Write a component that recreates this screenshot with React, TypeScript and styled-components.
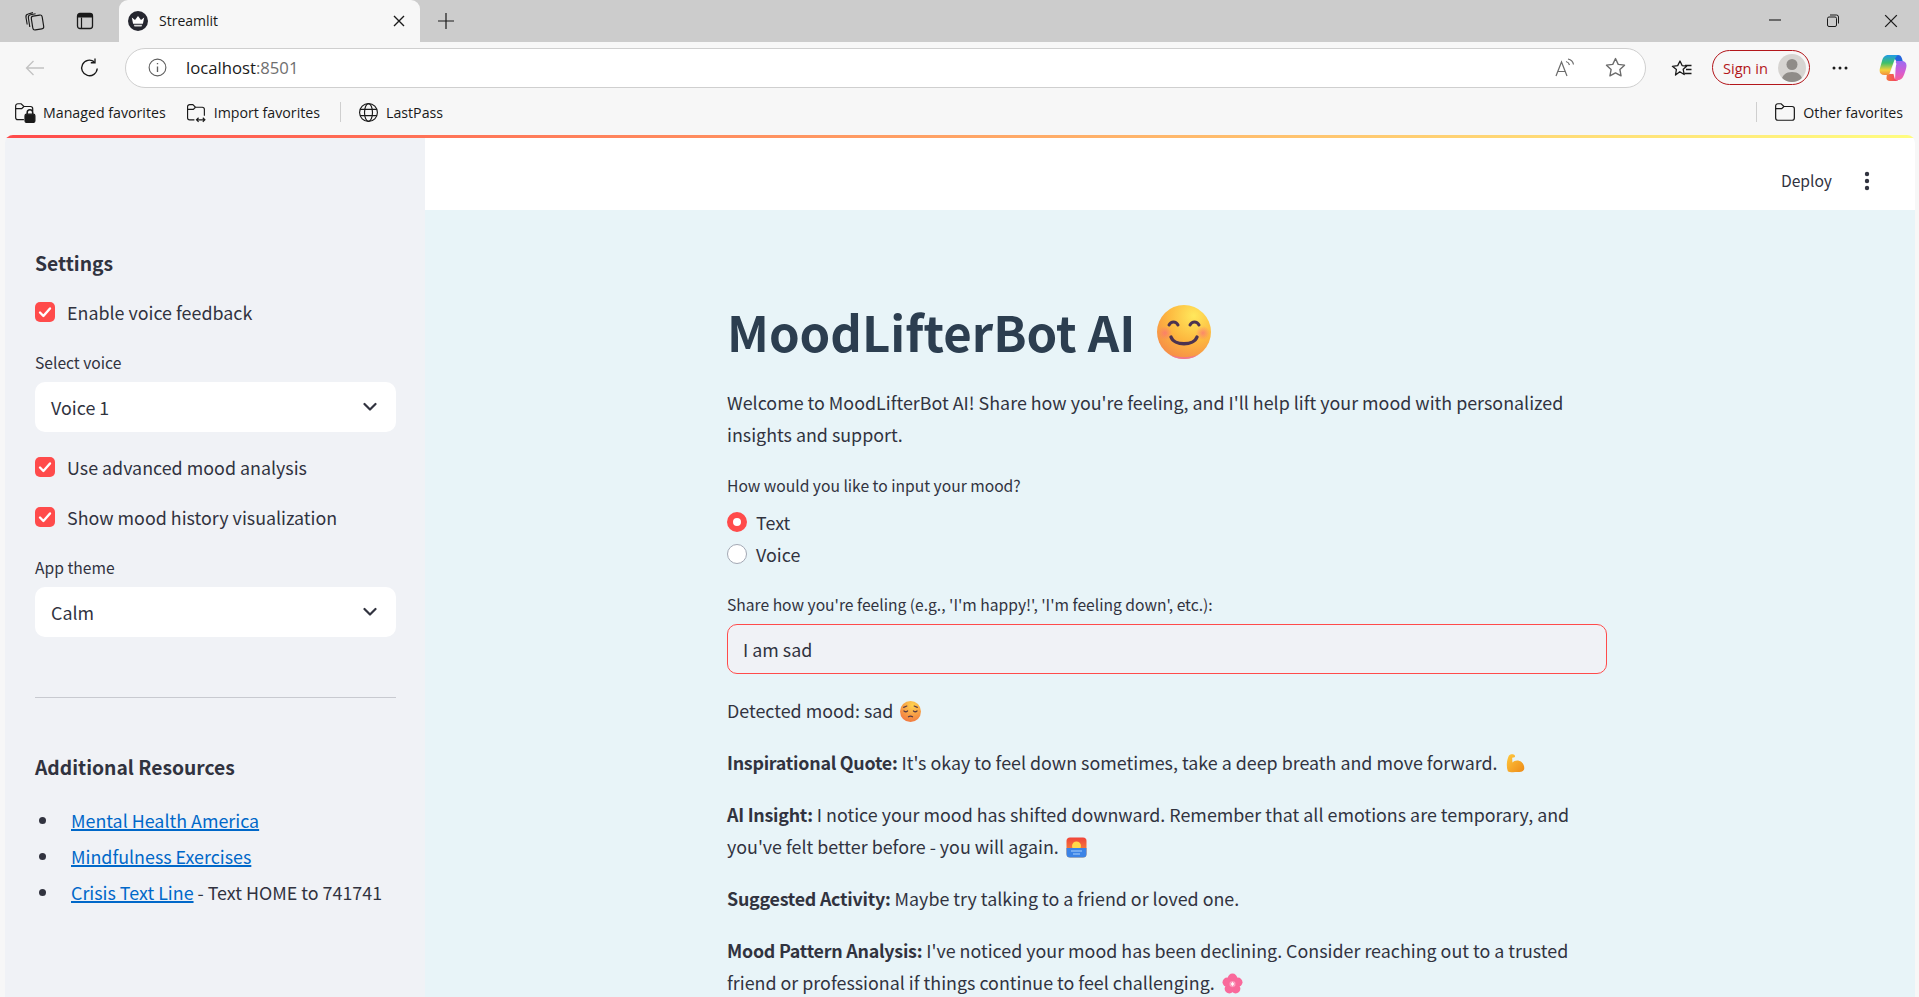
import React from 'react';
import styled, { createGlobalStyle } from 'styled-components';

const chromeFont = `"Open Sans", "Noto Sans", sans-serif`;
const pageFont = `"Noto Sans CJK JP", "Noto Sans", sans-serif`;

const Global = createGlobalStyle`
  html, body { margin: 0; padding: 0; height: 100%; overflow: hidden; background: #f7f7f7; }
  #root { height: 100%; }
  * { box-sizing: border-box; }
`;

const Shell = styled.div`
  display: flex;
  flex-direction: column;
  height: 997px;
  overflow: hidden;
  font-family: ${chromeFont};
  background: #f7f7f7;
`;

const TabStrip = styled.div`
  display: flex;
  align-items: flex-end;
  height: 42px;
  flex: none;
  padding-left: 8px;
  background: #cccccc;
  color: #1a1a1a;
`;

const StripButton = styled.div`
  width: 51px;
  height: 42px;
  display: flex;
  align-items: center;
  justify-content: center;
  flex: none;
`;

const Tab = styled.div`
  width: 301px;
  height: 42px;
  margin-left: 9px;
  padding: 0 15px 0 9px;
  display: flex;
  align-items: center;
  gap: 11px;
  background: #f7f7f7;
  border-radius: 9px 9px 0 0;
  flex: none;
  font-size: 14px;
`;

const TabTitle = styled.span`
  flex: 1;
  margin-top: -1px;
`;

const Spacer = styled.div`
  flex: 1;
`;

const WindowButtons = styled.div`
  display: flex;
  align-self: stretch;
`;

const WindowButton = styled.div`
  width: 58px;
  padding-left: 2px;
  display: flex;
  align-items: center;
  justify-content: center;
`;

const Toolbar = styled.div`
  display: flex;
  align-items: center;
  height: 51px;
  flex: none;
  padding: 0 3px 0 12px;
`;

const NavButton = styled.div<{ $width?: number; $left?: number }>`
  width: ${(p) => p.$width ?? 46}px;
  margin-left: ${(p) => p.$left ?? 0}px;
  height: 38px;
  display: flex;
  align-items: center;
  justify-content: center;
  flex: none;
`;

const AddressBar = styled.div`
  flex: 1;
  height: 40px;
  margin-left: 3px;
  padding: 0 5px 0 22px;
  display: flex;
  align-items: center;
  background: #fff;
  border: 1px solid #cfcfcf;
  border-radius: 20px;
`;

const Url = styled.div`
  margin-left: 19px;
  font-size: 16.7px;
  color: #1a1a1a;
`;

const UrlPort = styled.span`
  color: #6f6f6f;
`;

const AddressIcon = styled.div`
  width: 50px;
  display: flex;
  justify-content: center;
`;

const SignIn = styled.div`
  display: flex;
  align-items: center;
  justify-content: space-between;
  width: 98px;
  height: 35px;
  margin-left: 8px;
  padding: 0 3px 0 10px;
  border: 1.5px solid #b3161b;
  border-radius: 18px;
  font-size: 14.6px;
  color: #b3161b;
  flex: none;
`;

const Avatar = styled.div`
  width: 28px;
  height: 28px;
  border-radius: 50%;
  overflow: hidden;
  background: #d6d4d1;
`;

const BookmarkBar = styled.div`
  display: flex;
  align-items: center;
  height: 42px;
  flex: none;
  padding: 0 16px 4px 14px;
  font-size: 14.2px;
  color: #1a1a1a;
`;

const Bookmark = styled.div<{ $last?: boolean }>`
  display: flex;
  align-items: center;
  gap: 7px;
  margin-right: ${(p) => (p.$last ? 0 : 20)}px;
`;

const BookmarkDivider = styled.div`
  width: 1px;
  height: 20px;
  background: #cfcfcf;
  margin-right: 17px;
`;

const Page = styled.div`
  flex: 1;
  min-height: 0;
  margin: 0 4px 0 5px;
  display: flex;
  flex-direction: column;
  border-radius: 8px 8px 0 0;
  overflow: hidden;
  font-family: ${pageFont};
  color: #31333f;
`;

const Decoration = styled.div`
  height: 3px;
  flex: none;
  background: linear-gradient(90deg, #ff4b4b, #fffd80);
`;

const Columns = styled.div`
  flex: 1;
  min-height: 0;
  display: flex;
`;

const Sidebar = styled.aside`
  width: 420px;
  flex: none;
  padding: 110px 29px 0 30px;
  background: #f0f2f6;
`;

const SideHeading = styled.h3<{ $top?: number }>`
  margin: ${(p) => p.$top ?? 0}px 0 0;
  font-size: 19.3px;
  line-height: 30px;
  font-weight: 600;
  color: #31333f;
`;

const CheckRow = styled.label<{ $top?: number }>`
  display: flex;
  align-items: center;
  gap: 12px;
  height: 32px;
  margin-top: ${(p) => p.$top ?? 18}px;
  font-size: 17.86px;
  line-height: 32px;
`;

const CheckBox = styled.span`
  width: 20px;
  height: 20px;
  border-radius: 5px;
  background: #ff4b4b;
  display: flex;
  align-items: center;
  justify-content: center;
  flex: none;
`;

const FieldLabel = styled.div<{ $top?: number }>`
  margin-top: ${(p) => p.$top ?? 0}px;
  font-size: 15.63px;
  line-height: 26px;
  height: 24px;
`;

const SelectBox = styled.div`
  height: 50px;
  margin-top: 8px;
  padding: 0 19px 0 16px;
  display: flex;
  align-items: center;
  justify-content: space-between;
  background: #fff;
  border-radius: 10px;
  font-size: 17.86px;
`;

const Rule = styled.hr`
  margin: 60px 0 0;
  border: none;
  border-top: 1px solid #c8cad0;
`;

const ResourceList = styled.ul`
  margin: 22px 0 0;
  padding: 0;
  list-style: none;
  font-size: 17.86px;
  line-height: 32px;
`;

const ResourceItem = styled.li`
  display: flex;
  align-items: center;
  margin-bottom: 4px;
  white-space: pre;

  &::before {
    content: '';
    width: 7px;
    height: 7px;
    margin: 0 25px 0 4px;
    border-radius: 50%;
    background: #31333f;
    flex: none;
  }
`;

const Link = styled.a`
  color: #0068c9;
  text-decoration: underline;
  text-decoration-thickness: 1.5px;
`;

const Main = styled.main`
  flex: 1;
  min-width: 0;
  display: flex;
  flex-direction: column;
  background: #e8f4f8;
`;

const MainHeader = styled.header`
  height: 72px;
  flex: none;
  padding: 13px 45px 0 0;
  display: flex;
  align-items: center;
  justify-content: flex-end;
  gap: 32px;
  background: #fff;
  font-size: 15.63px;
  color: #31333f;
`;

const Content = styled.div`
  width: 880px;
  margin-left: 302px;
  padding-top: 84px;
`;

const Title = styled.h1`
  margin: 0;
  display: flex;
  align-items: center;
  height: 74px;
  gap: 22px;
  font-size: 49.1px;
  line-height: 74px;
  font-weight: 700;
  color: #2c3e50;

  svg {
    margin-top: 2px;
  }
`;

const Para = styled.p`
  margin: 0 0 20px;
  font-size: 17.86px;
  line-height: 32px;
  color: #31333f;

  strong {
    font-weight: 600;
    letter-spacing: -0.25px;
  }
`;

const Lead = styled(Para)`
  margin: 18px 0 23px;
`;

const RadioGroup = styled.div`
  display: flex;
  flex-direction: column;
  margin-top: 9px;
`;

const RadioRow = styled.div`
  display: flex;
  align-items: center;
  gap: 9px;
  height: 32px;
  font-size: 17.86px;
`;

const RadioDot = styled.span<{ $on?: boolean }>`
  width: 20px;
  height: 20px;
  border-radius: 50%;
  flex: none;
  background: #fff;
  border: ${(p) => (p.$on ? '6px solid #ff4b4b' : '1px solid #a3a8b4')};
`;

const TextField = styled.div`
  height: 50px;
  margin-top: 8px;
  padding: 0 15px;
  display: flex;
  align-items: center;
  background: #f0f2f6;
  border: 1px solid #ff4b4b;
  border-radius: 10px;
  font-size: 17.86px;
`;

const Results = styled.div`
  margin-top: 20px;
`;

const Inline = styled.span`
  display: inline-flex;
  vertical-align: -4px;
  margin-left: 3px;
`;

const WorkspacesIcon = () => (
  <svg width="22" height="22" viewBox="0 0 22 22" fill="none" stroke="#1a1a1a" strokeWidth="1.150">
    <rect x="9" y="5.500" width="11" height="14" rx="2.200" transform="rotate(-9 14.500 12.500)" />
    <path d="M6.800 17 5.400 8c-.3-1.700.6-3 2.200-3.300l5-.9" />
    <path d="M4.200 14.500 3 7.500C2.700 5.700 3.600 4.300 5.200 4l4.800-1.400" />
  </svg>
);

const TabsIcon = () => (
  <svg width="18" height="18" viewBox="0 0 18 18">
    <rect x="1.500" y="1.500" width="15" height="15" rx="2.500" fill="none" stroke="#1a1a1a" strokeWidth="1.300" />
    <path d="M1.500 4A2.500 2.500 0 0 1 4 1.500h10A2.500 2.500 0 0 1 16.500 4v1.500h-15z" fill="#1a1a1a" />
    <path d="M5.500 5.500v11" stroke="#1a1a1a" strokeWidth="1.200" />
  </svg>
);

const FaviconCrown = () => (
  <svg width="20" height="20" viewBox="0 0 20 20">
    <circle cx="10" cy="10" r="10" fill="#25262f" />
    <path d="M3.800 6.500 7 9 10 5l3 4 3.200-2.500-1.300 6.300H5.100z" fill="#fff" />
    <path d="M5.800 13.800h8.400l-.7 1.600H6.500z" fill="#dcdcdc" />
  </svg>
);

const CloseGlyph = ({ size = 12, width = 1.4 }: { size?: number; width?: number }) => (
  <svg width={size} height={size} viewBox="0 0 12 12">
    <path d="M1 1l10 10M11 1 1 11" stroke="#1a1a1a" strokeWidth={width} fill="none" />
  </svg>
);

const PlusGlyph = () => (
  <svg width="18" height="18" viewBox="0 0 18 18">
    <path d="M9 1v16M1 9h16" stroke="#1a1a1a" strokeWidth="1.200" />
  </svg>
);

const MinimizeGlyph = () => (
  <svg width="14" height="14" viewBox="0 0 14 14">
    <path d="M1 6h12" stroke="#1a1a1a" strokeWidth="1.100" />
  </svg>
);

const RestoreGlyph = () => (
  <svg width="14" height="14" viewBox="0 0 14 14" fill="none" stroke="#1a1a1a" strokeWidth="1">
    <rect x="1.500" y="3" width="9" height="9.500" rx="1.500" />
    <path d="M4 1h6.500A2 2 0 0 1 12.500 3v6.500" />
  </svg>
);

const BackIcon = () => (
  <svg width="20" height="18" viewBox="0 0 20 18" fill="none" stroke="#c2c2c2" strokeWidth="1.300">
    <path d="M19 9H1.500M8.500 2 1.500 9l7 7" />
  </svg>
);

const ReloadIcon = () => (
  <svg width="20" height="20" viewBox="0 0 18 18" fill="none" stroke="#1a1a1a" strokeWidth="1.200">
    <path d="M15.500 9.500a7 7 0 1 1-2.600-6" />
    <path d="M13.500 0.500v3.800H9.700" />
  </svg>
);

const InfoIcon = () => (
  <svg width="19" height="19" viewBox="0 0 17 17" fill="none" stroke="#5e5e5e" strokeWidth="1">
    <circle cx="8.500" cy="8.500" r="7.500" />
    <path d="M8.500 7.500v5M8.500 4.400v1.200" strokeWidth="1.200" />
  </svg>
);

const ReadAloudIcon = () => (
  <svg width="20" height="20" viewBox="0 0 20 20" fill="none" stroke="#6b6b6b" strokeWidth="1.200">
    <path d="M1 18 6.500 4 12 18M3 13.500h7" />
    <path d="M11 3.500c2 .5 3 1.500 3.500 3.500M13 1c3 .6 5 2.500 5.500 5.500" />
  </svg>
);

const StarIcon = () => (
  <svg width="21" height="21" viewBox="0 0 20 20" fill="none" stroke="#6b6b6b" strokeWidth="1.300" strokeLinejoin="round">
    <path d="M10 1.500l2.600 5.500 6 .8-4.400 4.200 1.100 6L10 15.100 4.700 18l1.100-6L1.400 7.800l6-.8z" />
  </svg>
);

const FavoritesIcon = () => (
  <svg width="21" height="20" viewBox="0 0 21 20" fill="none" stroke="#1a1a1a" strokeWidth="1.300" strokeLinejoin="round">
    <path d="M9 .5l2.100 4.600 4.500.6-3.400 3.100 1 5.200L8.800 11.200 4.500 14.500 5.400 9 1.400 5.800l5.300-.7z" transform="translate(0 2.500)" />
    <path d="M14 7.500h6.500M15 11.500h5.500M13.500 15.500h7" />
  </svg>
);

const AvatarGlyph = () => (
  <svg width="28" height="28" viewBox="0 0 28 28">
    <circle cx="14" cy="10.500" r="5.500" fill="#8f8c88" />
    <path d="M3.500 28c0-7 4.500-10 10.500-10s10.500 3 10.500 10z" fill="#8f8c88" />
  </svg>
);

const DotsIcon = () => (
  <svg width="18" height="6" viewBox="0 0 18 6" fill="#1a1a1a">
    <circle cx="3" cy="3" r="1.500" />
    <circle cx="9" cy="3" r="1.500" />
    <circle cx="15" cy="3" r="1.500" />
  </svg>
);

const CopilotIcon = () => (
  <svg width="28" height="28" viewBox="0 0 28 28">
    <defs>
      <linearGradient id="cpA" x1="0" y1="0" x2="0" y2="1">
        <stop offset="0" stopColor="#1f9be8" />
        <stop offset="0.4" stopColor="#3fc06a" />
        <stop offset="0.75" stopColor="#f4d13a" />
        <stop offset="1" stopColor="#f28c3c" />
      </linearGradient>
      <linearGradient id="cpB" x1="0" y1="0" x2="0" y2="1">
        <stop offset="0" stopColor="#9a6cf2" />
        <stop offset="0.6" stopColor="#d65cd0" />
        <stop offset="1" stopColor="#f7609a" />
      </linearGradient>
      <linearGradient id="cpC" x1="0" y1="0" x2="1" y2="0">
        <stop offset="0" stopColor="#f4783c" />
        <stop offset="1" stopColor="#f23c6a" />
      </linearGradient>
    </defs>
    <path d="M13 1h6c2 0 3.200 1 4 3.500L24 8h-6z" fill="#2465dd" />
    <path d="M17 7h6c2.500 0 4.500 1.500 4.500 4.500 0 2-1 5-2 8-1.200 3.800-3 6.500-6.500 6.500h-3z" fill="url(#cpB)" />
    <path d="M8 20h6.500l1 4c.4 1.500 1.500 2.500 3.500 2.500v.5h-8c-2.500 0-4-1.500-3.500-3.500z" fill="url(#cpC)" />
    <path d="M9.500 1C5.500 1 4 3.500 3 7L1 14c-1.200 4 .5 7 4.500 7H10l4-11c1.500-4.500 2.500-7.500 5-9z" fill="url(#cpA)" />
    <path d="M16.500 9c-.8 0-1.300.5-1.700 1.500L12 18c-.3 1 .2 1.500.8 1.500 1 0 1.500-.6 1.900-1.700l2.600-7.300c.4-1-.1-1.500-.8-1.500z" fill="#fff" />
  </svg>
);

const ManagedIcon = () => (
  <svg width="22" height="22" viewBox="0 0 20 20" fill="none" stroke="#1a1a1a" strokeWidth="1.100">
    <path d="M9 17H3.500A2 2 0 0 1 1.500 15V4.500A2 2 0 0 1 3.500 2.500h3l2.500 2.500h6a2 2 0 0 1 2 2v2" />
    <path d="M1.500 7h5.500l2-2" />
    <rect x="10" y="12" width="9" height="7.500" rx="1.500" fill="#1a1a1a" />
    <path d="M12 12v-1.500a2.500 2.500 0 0 1 5 0V12" strokeWidth="1.400" />
  </svg>
);

const ImportIcon = () => (
  <svg width="21" height="21" viewBox="0 0 20 20" fill="none" stroke="#1a1a1a" strokeWidth="1.100">
    <path d="M8 17H3.500A2 2 0 0 1 1.500 15V4.500A2 2 0 0 1 3.500 2.500h3l2.500 2.500h6.500a2 2 0 0 1 2 2v6" />
    <path d="M1.500 7h5.500l2-2" />
    <path d="M10 17h8M12 15l-2 2 2 2M16 15l2 2-2 2" />
  </svg>
);

const GlobeIcon = () => (
  <svg width="21" height="21" viewBox="0 0 20 20" fill="none" stroke="#1a1a1a" strokeWidth="1.100">
    <circle cx="10" cy="10" r="8.500" />
    <ellipse cx="10" cy="10" rx="3.800" ry="8.500" />
    <path d="M2 7h16M2 13h16" />
  </svg>
);

const FolderIcon = () => (
  <svg width="22" height="22" viewBox="0 0 20 20" fill="none" stroke="#1a1a1a" strokeWidth="1.100">
    <path d="M3.500 17.500A2 2 0 0 1 1.500 15.500V4.500A2 2 0 0 1 3.500 2.500h3l2.500 2.500h7.500a2 2 0 0 1 2 2v8.500a2 2 0 0 1-2 2z" />
    <path d="M1.500 7h5.500l2-2" />
  </svg>
);

const KebabIcon = () => (
  <svg width="6" height="20" viewBox="0 0 6 20" fill="#31333f">
    <circle cx="3" cy="3" r="2.200" />
    <circle cx="3" cy="10" r="2.200" />
    <circle cx="3" cy="17" r="2.200" />
  </svg>
);

const TickIcon = () => (
  <svg width="14" height="14" viewBox="0 0 14 14" fill="none" stroke="#fff" strokeWidth="2.400" strokeLinecap="round" strokeLinejoin="round">
    <path d="M2 7.500 5.400 11 12 3.500" />
  </svg>
);

const ChevronIcon = () => (
  <svg width="14" height="10" viewBox="0 0 14 10" fill="none" stroke="#31333f" strokeWidth="2.200" strokeLinecap="round" strokeLinejoin="round">
    <path d="M1.500 2 7 7.500 12.500 2" />
  </svg>
);

const SmileEmoji = () => (
  <svg width="54" height="54" viewBox="0 0 54 54">
    <defs>
      <radialGradient id="smFace" cx="0.68" cy="0.2" r="0.95">
        <stop offset="0" stopColor="#ffe85c" />
        <stop offset="0.5" stopColor="#fdb83f" />
        <stop offset="1" stopColor="#f4824a" />
      </radialGradient>
      <radialGradient id="smCheek">
        <stop offset="0" stopColor="#fb6f78" stopOpacity="0.7" />
        <stop offset="1" stopColor="#fb6f78" stopOpacity="0" />
      </radialGradient>
    </defs>
    <circle cx="27" cy="27" r="27" fill="url(#smFace)" />
    <path d="M12 49.500a27 27 0 0 0 30 0c-9 3.500-21 3.500-30 0z" fill="#f06fa0" opacity="0.8" />
    <circle cx="8" cy="28" r="7" fill="url(#smCheek)" />
    <circle cx="46" cy="28" r="7" fill="url(#smCheek)" />
    <g fill="none" stroke="#4c3350" strokeWidth="3" strokeLinecap="round">
      <path d="M12 20c2-4 7-4 9 0" />
      <path d="M33 20c2-4 7-4 9 0" />
      <path d="M14 32c3 9 23 9 26 0" strokeWidth="3.400" />
    </g>
  </svg>
);

const PensiveEmoji = () => (
  <svg width="21" height="21" viewBox="0 0 20 20">
    <defs>
      <radialGradient id="peFace" cx="0.6" cy="0.2" r="0.9">
        <stop offset="0" stopColor="#ffd34f" />
        <stop offset="1" stopColor="#f0703f" />
      </radialGradient>
    </defs>
    <circle cx="10" cy="10" r="10" fill="url(#peFace)" />
    <g fill="none" stroke="#5a3a44" strokeWidth="1.200" strokeLinecap="round">
      <path d="M3.500 6l3-1.200M16.500 6l-3-1.200M3.800 9.500c1 .8 2.500.8 3.400 0M12.800 9.500c1 .8 2.500.8 3.400 0" />
      <path d="M8 15c1-.6 3-.6 4 0" />
    </g>
  </svg>
);

const MuscleEmoji = () => (
  <svg width="21" height="21" viewBox="0 0 22 22">
    <defs>
      <linearGradient id="muArm" x1="0" y1="0" x2="1" y2="1">
        <stop offset="0" stopColor="#ffc83d" />
        <stop offset="1" stopColor="#ed8a18" />
      </linearGradient>
    </defs>
    <path d="M3 19c-2-5-1-12 1-16 .5-1.500 3-2 5-1.500 1.500.4 2 2 1 3L7.500 5 7.800 10c2-2.500 6.500-3 9.500-.5 2.500 2 3.500 6 2.500 8-1 2-4 2.500-7 2.500-3.500 0-8 .5-9.800-1z" fill="url(#muArm)" />
  </svg>
);

const SunriseEmoji = () => (
  <svg width="21" height="21" viewBox="0 0 21 21">
    <defs>
      <linearGradient id="srSky" x1="0" y1="0" x2="0" y2="1">
        <stop offset="0" stopColor="#f0443a" />
        <stop offset="1" stopColor="#fba13a" />
      </linearGradient>
    </defs>
    <rect x="0.500" y="0.500" width="20" height="20" rx="3.500" fill="url(#srSky)" />
    <circle cx="10.500" cy="9" r="4.500" fill="#ffd84a" />
    <path d="M0.500 11h20v6a3.500 3.500 0 0 1-3.500 3.500H4A3.500 3.500 0 0 1 .5 17z" fill="#3b83e6" />
    <path d="M5 14h11M7 17h7" stroke="#a9d2fb" strokeWidth="1.200" />
  </svg>
);

const BlossomEmoji = () => (
  <svg width="21" height="21" viewBox="0 0 20 20">
    <g fill="#f9699b">
      <circle cx="10" cy="5" r="4.500" />
      <circle cx="15" cy="8.800" r="4.500" />
      <circle cx="13" cy="15" r="4.500" />
      <circle cx="7" cy="15" r="4.500" />
      <circle cx="5" cy="8.800" r="4.500" />
    </g>
    <circle cx="10" cy="10.500" r="3" fill="#fb96b9" />
    <path d="M10 8.500v4M8.300 9.500l3.400 2M11.700 9.500l-3.400 2" stroke="#fff" strokeWidth="0.800" />
  </svg>
);

function Check({ label, top }: { label: string; top?: number }) {
  return (
    <CheckRow $top={top}>
      <CheckBox>
        <TickIcon />
      </CheckBox>
      {label}
    </CheckRow>
  );
}

function Select({ value }: { value: string }) {
  return (
    <SelectBox>
      {value}
      <ChevronIcon />
    </SelectBox>
  );
}

export default function App() {
  return (
    <Shell>
      <Global />
      <TabStrip>
        <StripButton>
          <WorkspacesIcon />
        </StripButton>
        <StripButton>
          <TabsIcon />
        </StripButton>
        <Tab>
          <FaviconCrown />
          <TabTitle>Streamlit</TabTitle>
          <CloseGlyph />
        </Tab>
        <StripButton>
          <PlusGlyph />
        </StripButton>
        <Spacer />
        <WindowButtons>
          <WindowButton>
            <MinimizeGlyph />
          </WindowButton>
          <WindowButton>
            <RestoreGlyph />
          </WindowButton>
          <WindowButton>
            <CloseGlyph size={14} width={1.1} />
          </WindowButton>
        </WindowButtons>
      </TabStrip>
      <Toolbar>
        <NavButton>
          <BackIcon />
        </NavButton>
        <NavButton $width={64}>
          <ReloadIcon />
        </NavButton>
        <AddressBar>
          <InfoIcon />
          <Url>
            localhost<UrlPort>:8501</UrlPort>
          </Url>
          <Spacer />
          <AddressIcon>
            <ReadAloudIcon />
          </AddressIcon>
          <AddressIcon>
            <StarIcon />
          </AddressIcon>
        </AddressBar>
        <NavButton $left={12}>
          <FavoritesIcon />
        </NavButton>
        <SignIn>
          Sign in
          <Avatar>
            <AvatarGlyph />
          </Avatar>
        </SignIn>
        <NavButton $left={7}>
          <DotsIcon />
        </NavButton>
        <NavButton $left={7}>
          <CopilotIcon />
        </NavButton>
      </Toolbar>
      <BookmarkBar>
        <Bookmark>
          <ManagedIcon />
          Managed favorites
        </Bookmark>
        <Bookmark>
          <ImportIcon />
          Import favorites
        </Bookmark>
        <BookmarkDivider />
        <Bookmark>
          <GlobeIcon />
          LastPass
        </Bookmark>
        <Spacer />
        <BookmarkDivider />
        <Bookmark $last>
          <FolderIcon />
          Other favorites
        </Bookmark>
      </BookmarkBar>
      <Page>
        <Decoration />
        <Columns>
          <Sidebar>
            <SideHeading>Settings</SideHeading>
            <Check label="Enable voice feedback" />
            <FieldLabel $top={22}>Select voice</FieldLabel>
            <Select value="Voice 1" />
            <Check label="Use advanced mood analysis" top={19} />
            <Check label="Show mood history visualization" />
            <FieldLabel $top={22}>App theme</FieldLabel>
            <Select value="Calm" />
            <Rule />
            <SideHeading $top={54}>Additional Resources</SideHeading>
            <ResourceList>
              <ResourceItem>
                <Link href="#">Mental Health America</Link>
              </ResourceItem>
              <ResourceItem>
                <Link href="#">Mindfulness Exercises</Link>
              </ResourceItem>
              <ResourceItem>
                <Link href="#">Crisis Text Line</Link> - Text HOME to 741741
              </ResourceItem>
            </ResourceList>
          </Sidebar>
          <Main>
            <MainHeader>
              Deploy
              <KebabIcon />
            </MainHeader>
            <Content>
              <Title>
                MoodLifterBot AI
                <SmileEmoji />
              </Title>
              <Lead>
                Welcome to MoodLifterBot AI! Share how you're feeling, and I'll help lift your mood with personalized
                insights and support.
              </Lead>
              <FieldLabel>How would you like to input your mood?</FieldLabel>
              <RadioGroup>
                <RadioRow>
                  <RadioDot $on />
                  Text
                </RadioRow>
                <RadioRow>
                  <RadioDot />
                  Voice
                </RadioRow>
              </RadioGroup>
              <FieldLabel $top={22}>Share how you're feeling (e.g., 'I'm happy!', 'I'm feeling down', etc.):</FieldLabel>
              <TextField>I am sad</TextField>
              <Results>
                <Para>
                  Detected mood: sad{' '}
                  <Inline>
                    <PensiveEmoji />
                  </Inline>
                </Para>
                <Para>
                  <strong>Inspirational Quote:</strong> It's okay to feel down sometimes, take a deep breath and move
                  forward.{' '}
                  <Inline>
                    <MuscleEmoji />
                  </Inline>
                </Para>
                <Para>
                  <strong>AI Insight:</strong> I notice your mood has shifted downward. Remember that all emotions are
                  temporary, and you've felt better before - you will again.{' '}
                  <Inline>
                    <SunriseEmoji />
                  </Inline>
                </Para>
                <Para>
                  <strong>Suggested Activity:</strong> Maybe try talking to a friend or loved one.
                </Para>
                <Para>
                  <strong>Mood Pattern Analysis:</strong> I've noticed your mood has been declining. Consider reaching
                  out to a trusted friend or professional if things continue to feel challenging.{' '}
                  <Inline>
                    <BlossomEmoji />
                  </Inline>
                </Para>
              </Results>
            </Content>
          </Main>
        </Columns>
      </Page>
    </Shell>
  );
}
